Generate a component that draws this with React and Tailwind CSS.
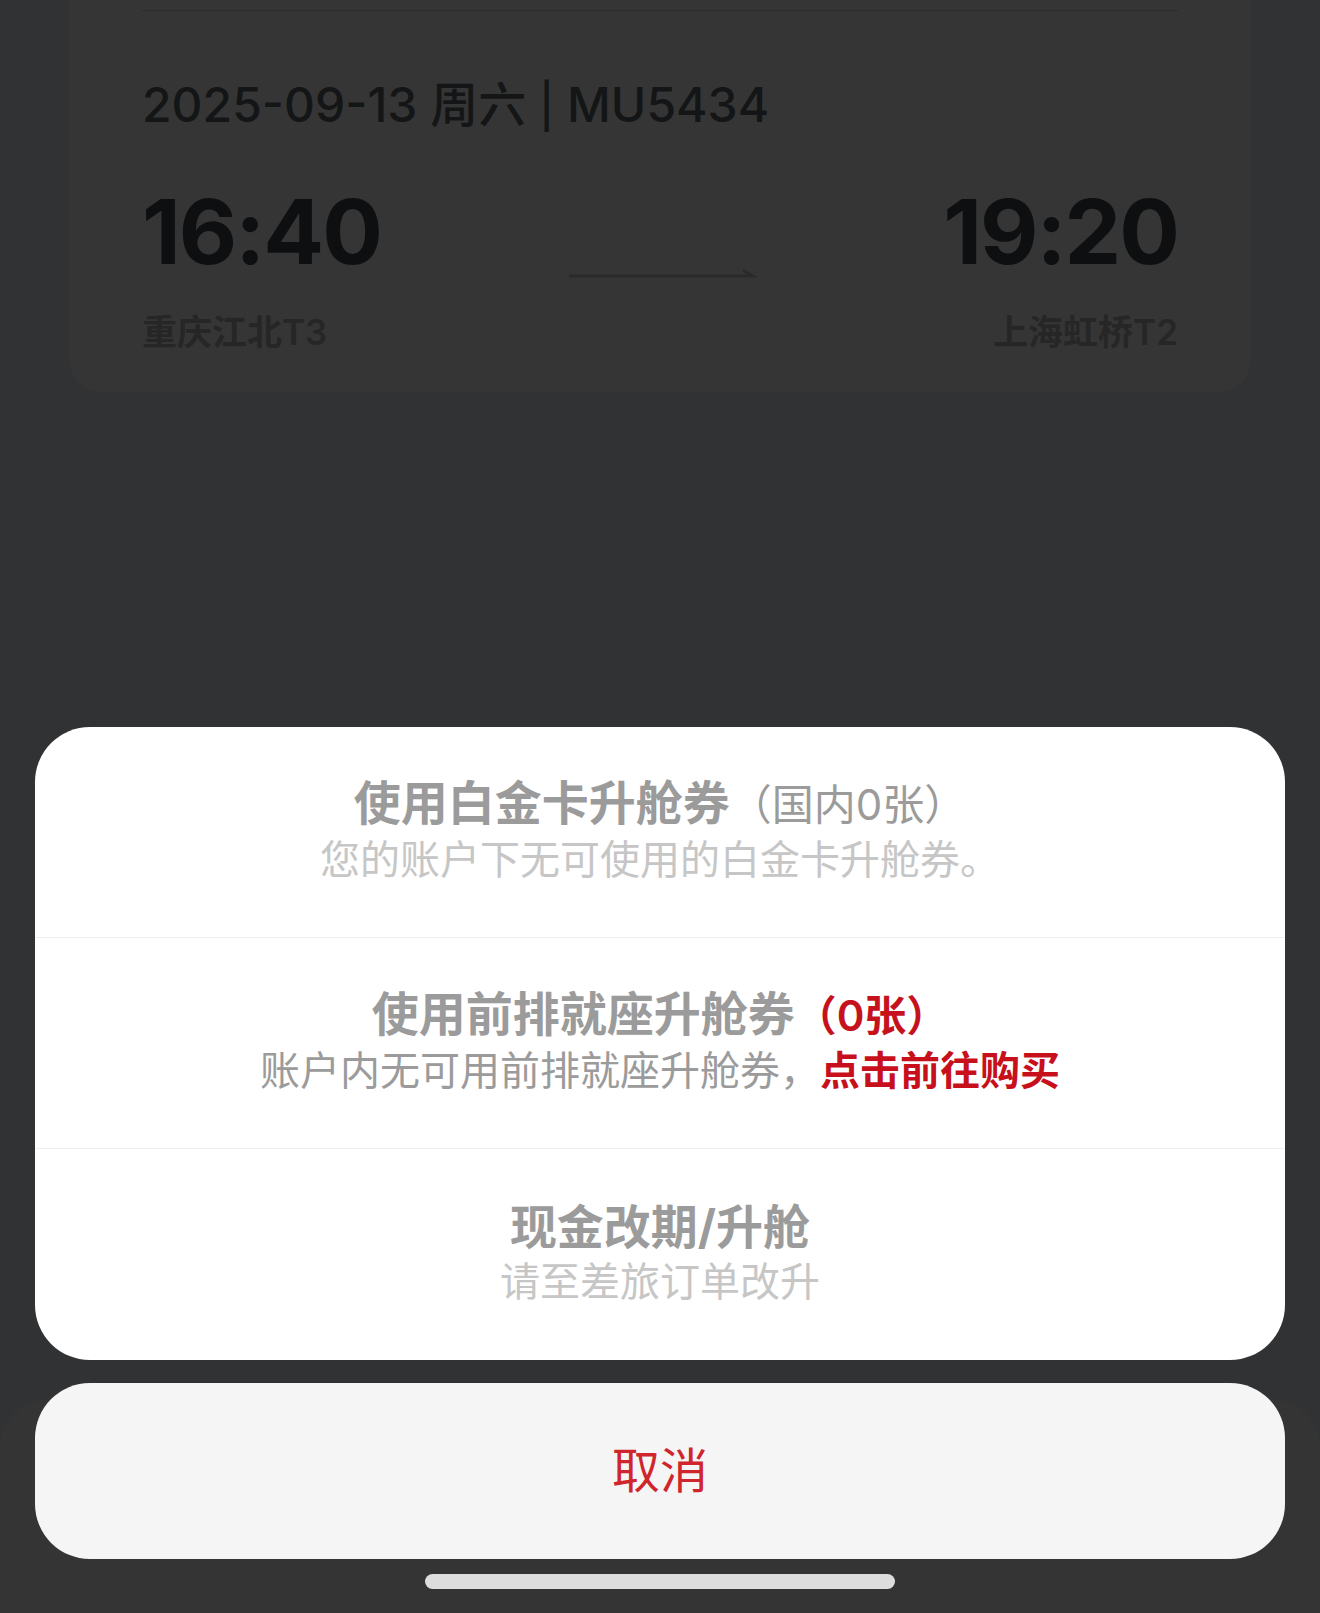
import React from "react";

const font = { fontFamily: 'Inter, "Noto Sans CJK SC", sans-serif' };

const FlightCard = () => (
  <div className="mx-[70px] rounded-b-[30px] bg-[#353535] px-[72px] pb-[38px]">
    {/* divider peeking from the card above */}
    <div className="h-[10px]" />
    <div className="h-px bg-[#2c2c2c]" />
    <div className="mt-[64px] text-[48px] font-medium leading-[60px] text-[#141516]">
      2025-09-13 周六 <span className="text-[44px]">|</span> MU5434
    </div>
    <div className="mt-[46px] flex items-center justify-between">
      <span className="text-[90px] font-bold leading-[100px] tracking-[-2px] text-[#0d0f10]">
        16:40
      </span>
      {/* flight arrow */}
      <svg width="190" height="12" viewBox="0 0 190 12" className="mt-[80px]">
        <path d="M2 10 H186 L176 4" fill="none" stroke="#2a2a2a" strokeWidth="3" />
      </svg>
      <span className="text-[90px] font-bold leading-[100px] tracking-[-2px] text-[#0d0f10]">
        19:20
      </span>
    </div>
    <div className="mt-[28px] flex justify-between text-[35px] font-semibold leading-[44px] text-[#262626]">
      <span>重庆江北T3</span>
      <span>上海虹桥T2</span>
    </div>
  </div>
);

const Option = ({ title, extra, desc, last }) => (
  <div
    className={`flex h-[211px] flex-col items-center justify-center text-center ${
      last ? "" : "border-b border-[#efefef]"
    }`}
  >
    <div className="flex items-baseline text-[47px] font-bold leading-[54px] text-[#9b9b9b]">
      {title}
      {extra}
    </div>
    <div className="text-[40px] leading-[56px]">{desc}</div>
  </div>
);

export default function App() {
  return (
    <div className="relative h-[1613px] w-[1320px] overflow-hidden bg-[#313234]" style={font}>
      <FlightCard />
      {/* underlying bottom bar of the page */}
      <div className="absolute inset-x-0 bottom-0 h-[213px] rounded-t-[46px] bg-[#343434]" />

      {/* action sheet */}
      <div className="absolute inset-x-0 bottom-0 flex flex-col items-center px-[35px]">
        <div className="w-full overflow-hidden rounded-[55px] bg-white">
          <Option
            title="使用白金卡升舱券"
            extra={<span className="text-[42px] font-normal text-[#9b9b9b]">（国内0张）</span>}
            desc={<span className="text-[#c6c6c6]">您的账户下无可使用的白金卡升舱券。</span>}
          />
          <Option
            title="使用前排就座升舱券"
            extra={<span className="text-[42px] font-semibold text-[#c5121c]">（0张）</span>}
            desc={
              <>
                <span className="text-[#9b9b9b]">账户内无可用前排就座升舱券，</span>
                <span className="font-semibold text-[#c8101c]">点击前往购买</span>
              </>
            }
          />
          <Option
            title="现金改期/升舱"
            desc={<span className="text-[#c6c6c6]">请至差旅订单改升</span>}
            last
          />
        </div>
        <button className="mt-[23px] flex h-[176px] w-full items-center justify-center rounded-[55px] bg-[#f5f5f5] text-[48px] text-[#d0252c]">
          取消
        </button>
        <div className="mb-[24px] mt-[15px] h-[15px] w-[470px] rounded-full bg-[#dddddd]" />
      </div>
    </div>
  );
}
